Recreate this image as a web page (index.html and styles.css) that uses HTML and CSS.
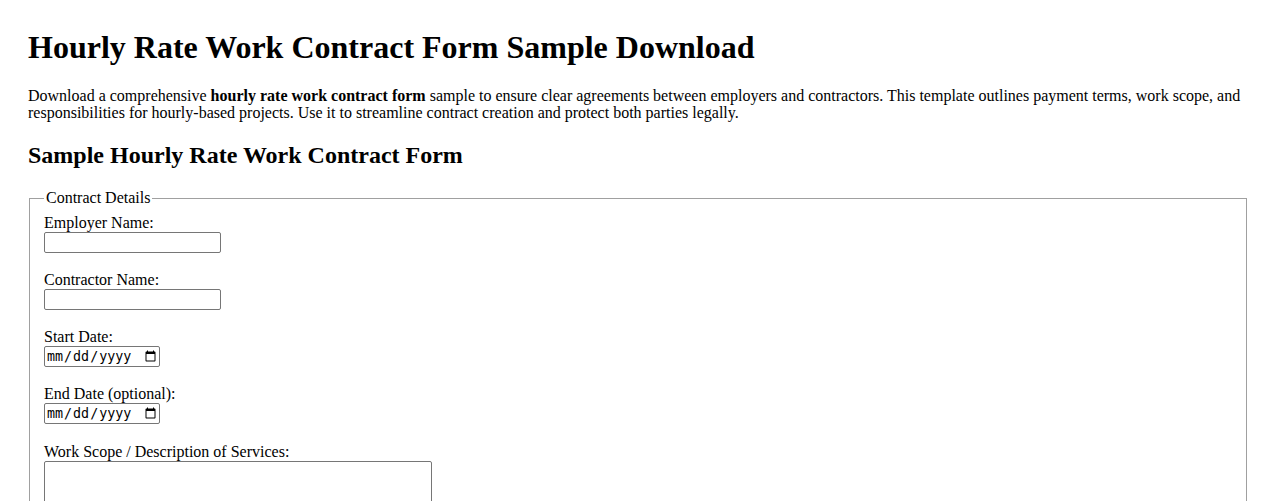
FILE: index.html
```html
<!DOCTYPE html>
<html lang="en">
<head>
<meta charset="utf-8">
<title>Hourly Rate Work Contract Form Sample Download</title>
<link rel="stylesheet" href="styles.css">
</head>
<body>
<div class="page">
  <h1 class="title">Hourly Rate Work Contract Form Sample Download</h1>
  <p class="intro">Download a comprehensive <strong>hourly rate work contract form</strong> sample to ensure clear agreements between employers and contractors. This template outlines payment terms, work scope, and responsibilities for hourly-based projects. Use it to streamline contract creation and protect both parties legally.</p>
  <h2 class="subtitle">Sample Hourly Rate Work Contract Form</h2>
  <form class="form">
    <fieldset class="fieldset">
      <legend class="legend">Contract Details</legend>
      <div class="field">
        <label class="label" for="employer">Employer Name:</label>
        <input class="text-input" type="text" id="employer">
      </div>
      <div class="field">
        <label class="label" for="contractor">Contractor Name:</label>
        <input class="text-input" type="text" id="contractor">
      </div>
      <div class="field">
        <label class="label" for="start">Start Date:</label>
        <input class="date-input" type="date" id="start">
      </div>
      <div class="field field-wide">
        <label class="label" for="end">End Date (optional):</label>
        <input class="date-input" type="date" id="end">
      </div>
      <div class="field">
        <label class="label" for="scope">Work Scope / Description of Services:</label>
        <textarea class="textarea" id="scope" rows="5"></textarea>
      </div>
    </fieldset>
  </form>
</div>
</body>
</html>
```
FILE: styles.css
```css
html, body {
  margin: 0;
  padding: 0;
  background: #fff;
}
body {
  font-family: "Liberation Serif", "Times New Roman", serif;
  font-size: 16px;
  color: #000;
}
.page {
  padding: 8px 30px 0 28px;
}
.title {
  font-size: 32px;
  font-weight: bold;
  margin: 21px 0;
  line-height: 37px;
}
.intro {
  margin: 16px 0;
  line-height: 17px;
}
.subtitle {
  font-size: 24px;
  font-weight: bold;
  margin: 20px 0;
  line-height: 28px;
}
.fieldset {
  margin: 0 1px;
  border: 1px solid #a0a0a0;
  padding: 7px 14px 12px 14px;
}
.legend {
  padding: 0 2px;
}
.field {
  margin-bottom: 18px;
}
.field-wide {
  margin-bottom: 19px;
}
.label {
  display: block;
  line-height: 18px;
}
.text-input {
  width: 177px;
  height: 21px;
  box-sizing: border-box;
  border: 1px solid #767676;
  border-radius: 2px;
  margin: 0;
}
.date-input {
  width: 116px;
  height: 21px;
  box-sizing: border-box;
  border: 1px solid #767676;
  border-radius: 2px;
  margin: 0;
}
.textarea {
  width: 388px;
  height: 80px;
  box-sizing: border-box;
  border: 1px solid #767676;
  border-radius: 2px;
  margin: 0;
  display: block;
}
```
